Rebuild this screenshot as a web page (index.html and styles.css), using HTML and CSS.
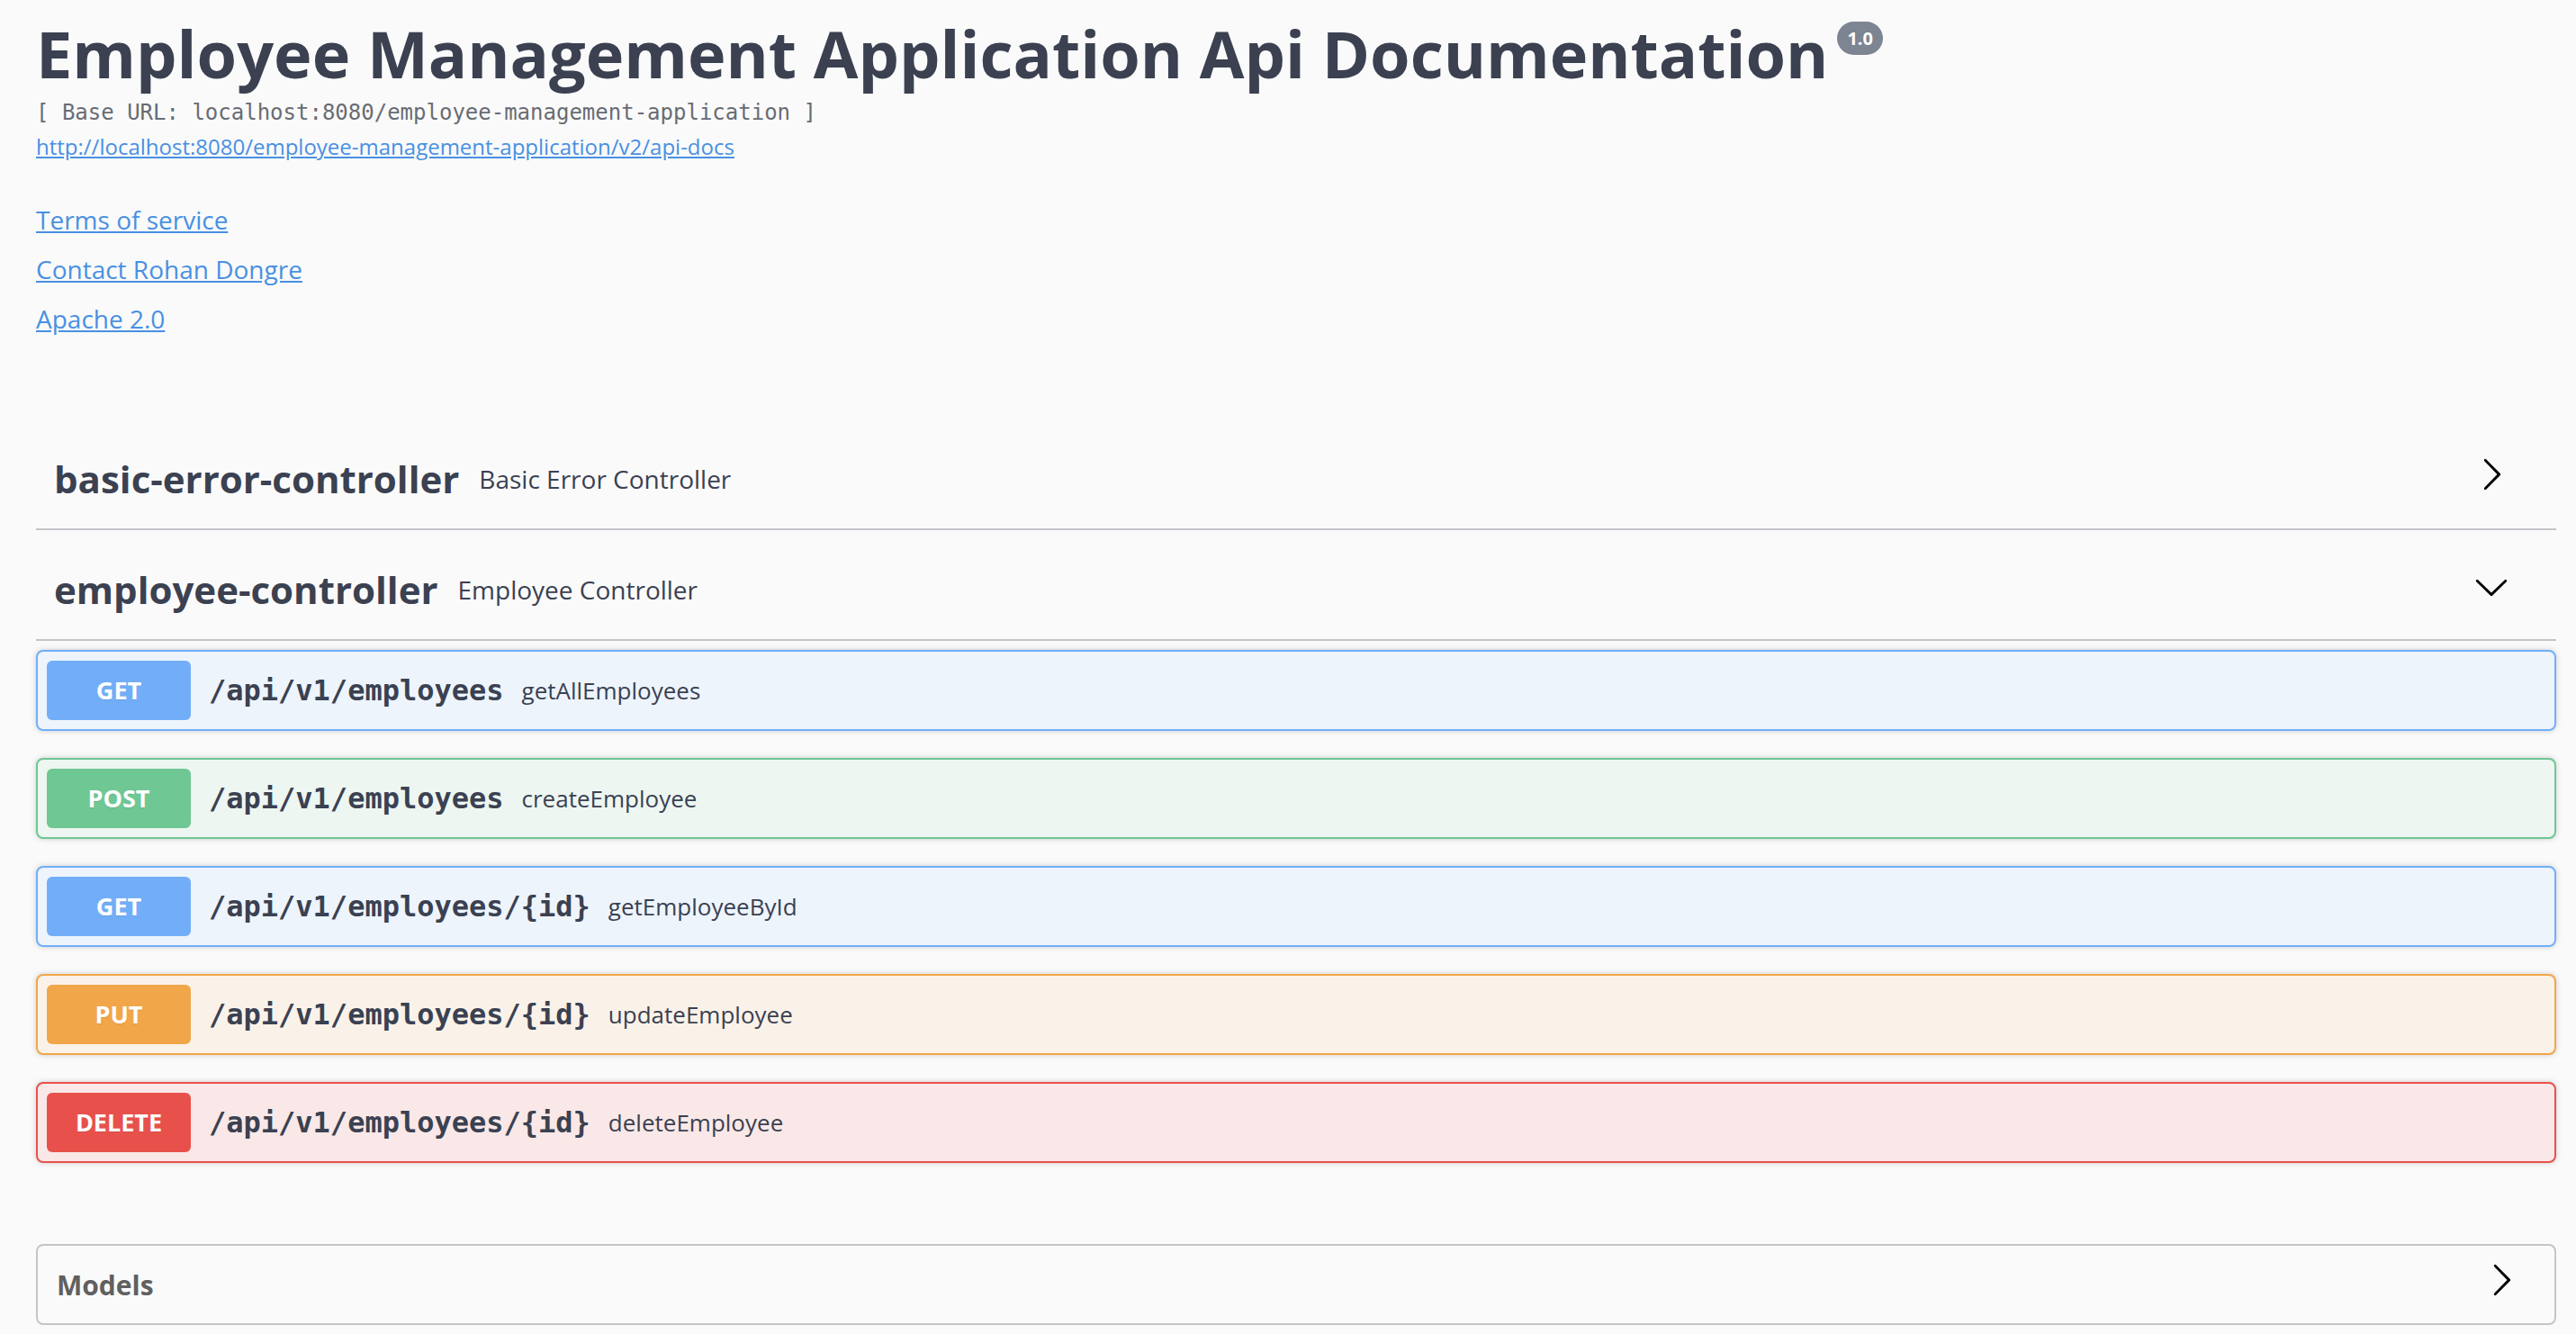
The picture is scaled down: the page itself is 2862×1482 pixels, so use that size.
FILE: index.html
```html
<!DOCTYPE html>
<html lang="en">
<head>
<meta charset="utf-8">
<title>Employee Management Application Api Documentation</title>
<link rel="stylesheet" href="styles.css">
</head>
<body>
<div class="wrapper">
  <section class="info">
    <div class="title-row">
      <h1 class="title">Employee Management Application Api Documentation</h1>
      <span class="version">1.0</span>
    </div>
    <pre class="base-url">[ Base URL: localhost:8080/employee-management-application ]</pre>
    <a class="spec-link" href="#">http://localhost:8080/employee-management-application/v2/api-docs</a>
    <div class="info-links">
      <a class="info-link" href="#">Terms of service</a>
      <a class="info-link" href="#">Contact Rohan Dongre</a>
      <a class="info-link" href="#">Apache 2.0</a>
    </div>
  </section>

  <section class="tag">
    <div class="tag-head">
      <h3 class="tag-name">basic-error-controller</h3>
      <span class="tag-desc">Basic Error Controller</span>
      <svg class="arrow" viewBox="0 0 20 20" width="40" height="40"><path d="M13.25 10L6.109 2.58a.697.697 0 0 1 0-.979.68.68 0 0 1 .969 0l7.83 7.908a.697.697 0 0 1 0 .979l-7.83 7.908a.68.68 0 0 1-.969 0 .697.697 0 0 1 0-.979L13.25 10z"/></svg>
    </div>
  </section>

  <section class="tag">
    <div class="tag-head">
      <h3 class="tag-name">employee-controller</h3>
      <span class="tag-desc">Employee Controller</span>
      <svg class="arrow arrow-down" viewBox="0 0 20 20" width="40" height="40"><path d="M13.25 10L6.109 2.58a.697.697 0 0 1 0-.979.68.68 0 0 1 .969 0l7.83 7.908a.697.697 0 0 1 0 .979l-7.83 7.908a.68.68 0 0 1-.969 0 .697.697 0 0 1 0-.979L13.25 10z"/></svg>
    </div>
    <div class="ops">
      <div class="op op-get">
        <span class="method">GET</span>
        <span class="path">/api/v1/employees</span>
        <span class="op-desc">getAllEmployees</span>
      </div>
      <div class="op op-post">
        <span class="method">POST</span>
        <span class="path">/api/v1/employees</span>
        <span class="op-desc">createEmployee</span>
      </div>
      <div class="op op-get">
        <span class="method">GET</span>
        <span class="path">/api/v1/employees/{id}</span>
        <span class="op-desc">getEmployeeById</span>
      </div>
      <div class="op op-put">
        <span class="method">PUT</span>
        <span class="path">/api/v1/employees/{id}</span>
        <span class="op-desc">updateEmployee</span>
      </div>
      <div class="op op-delete">
        <span class="method">DELETE</span>
        <span class="path">/api/v1/employees/{id}</span>
        <span class="op-desc">deleteEmployee</span>
      </div>
    </div>
  </section>

  <section class="models">
    <h4 class="models-title">Models</h4>
    <svg class="arrow" viewBox="0 0 20 20" width="40" height="40"><path d="M13.25 10L6.109 2.58a.697.697 0 0 1 0-.979.68.68 0 0 1 .969 0l7.83 7.908a.697.697 0 0 1 0 .979l-7.83 7.908a.68.68 0 0 1-.969 0 .697.697 0 0 1 0-.979L13.25 10z"/></svg>
  </section>
</div>
</body>
</html>
```

FILE: styles.css
```css
html, body {
  margin: 0;
  padding: 0;
  background: #fafafa;
}

body {
  font-family: "Open Sans", "Noto Sans", sans-serif;
  color: #3b4151;
}

.wrapper {
  padding: 16px 22px 0 40px;
}

/* ---------- info ---------- */
.info {
  display: flex;
  flex-direction: column;
  align-items: flex-start;
}

.title-row {
  display: flex;
  align-items: flex-start;
}

.title {
  margin: 0;
  font-size: 72px;
  line-height: 86px;
  font-weight: 700;
  color: #3b4151;
  white-space: nowrap;
}

.version {
  margin: 8px 0 0 10px;
  height: 37px;
  padding: 0 11px;
  line-height: 37px;
  border-radius: 57px;
  background: #7d8492;
  color: #fff;
  font-size: 20px;
  font-weight: 700;
}

.base-url {
  margin: 6px 0 0 0;
  font-family: "DejaVu Sans Mono", "Liberation Mono", monospace;
  font-size: 24px;
  line-height: 34px;
  color: #686c74;
}

.spec-link {
  margin-top: 4px;
  font-size: 24px;
  line-height: 34px;
  color: #4990e2;
  text-decoration: underline;
}

.info-links {
  margin-top: 37px;
  display: flex;
  flex-direction: column;
  align-items: flex-start;
}

.info-link {
  font-size: 28px;
  line-height: 55px;
  color: #4990e2;
  text-decoration: underline;
}

/* ---------- tags ---------- */
.info + .tag {
  margin-top: 94px;
}

.tag-head {
  display: flex;
  align-items: center;
  padding: 20px 52px 20px 20px;
  margin-bottom: 10px;
  border-bottom: 2px solid #c3c5ca;
}

.tag-name {
  margin: 0;
  font-size: 42px;
  line-height: 71px;
  font-weight: 700;
  color: #3b4151;
  white-space: nowrap;
}

.tag-desc {
  flex: 1;
  padding-left: 22px;
  font-size: 28px;
  color: #3b4151;
}

.arrow {
  flex: none;
  fill: #000;
  margin-bottom: 10px;
}

.arrow-down {
  transform: rotate(90deg);
  margin-bottom: 6px;
}

/* ---------- operations ---------- */
.ops {
  display: flex;
  flex-direction: column;
  gap: 30px;
}

.op {
  display: flex;
  align-items: center;
  padding: 10px;
  border: 2px solid;
  border-radius: 8px;
  box-shadow: 0 0 6px rgba(0, 0, 0, .19);
}

.method {
  flex: none;
  width: 160px;
  height: 66px;
  line-height: 66px;
  text-align: center;
  border-radius: 6px;
  color: #fff;
  font-size: 27px;
  font-weight: 700;
  text-shadow: 0 1px 0 rgba(0, 0, 0, .1);
}

.path {
  margin-left: 20px;
  font-family: "DejaVu Sans Mono", "Liberation Mono", monospace;
  font-size: 32px;
  font-weight: 700;
  color: #3b4151;
}

.op-desc {
  margin-left: 20px;
  font-size: 26px;
  color: #3b4151;
}

.op-get { background: #edf4fc; border-color: #72aef8; }
.op-get .method { background: #72aef8; }

.op-post { background: #edf6f1; border-color: #6fc794; }
.op-post .method { background: #6fc794; }

.op-put { background: #faf2e9; border-color: #f1a64a; }
.op-put .method { background: #f1a64a; }

.op-delete { background: #f9e8e7; border-color: #e8514b; }
.op-delete .method { background: #e8514b; }

/* ---------- models ---------- */
.models {
  margin-top: 90px;
  display: flex;
  align-items: center;
  padding: 0 39px 0 21px;
  height: 86px;
  border: 2px solid #c3c5ca;
  border-radius: 8px;
}

.models-title {
  flex: 1;
  margin: 0;
  font-size: 30px;
  font-weight: 700;
  color: #606060;
}
```
